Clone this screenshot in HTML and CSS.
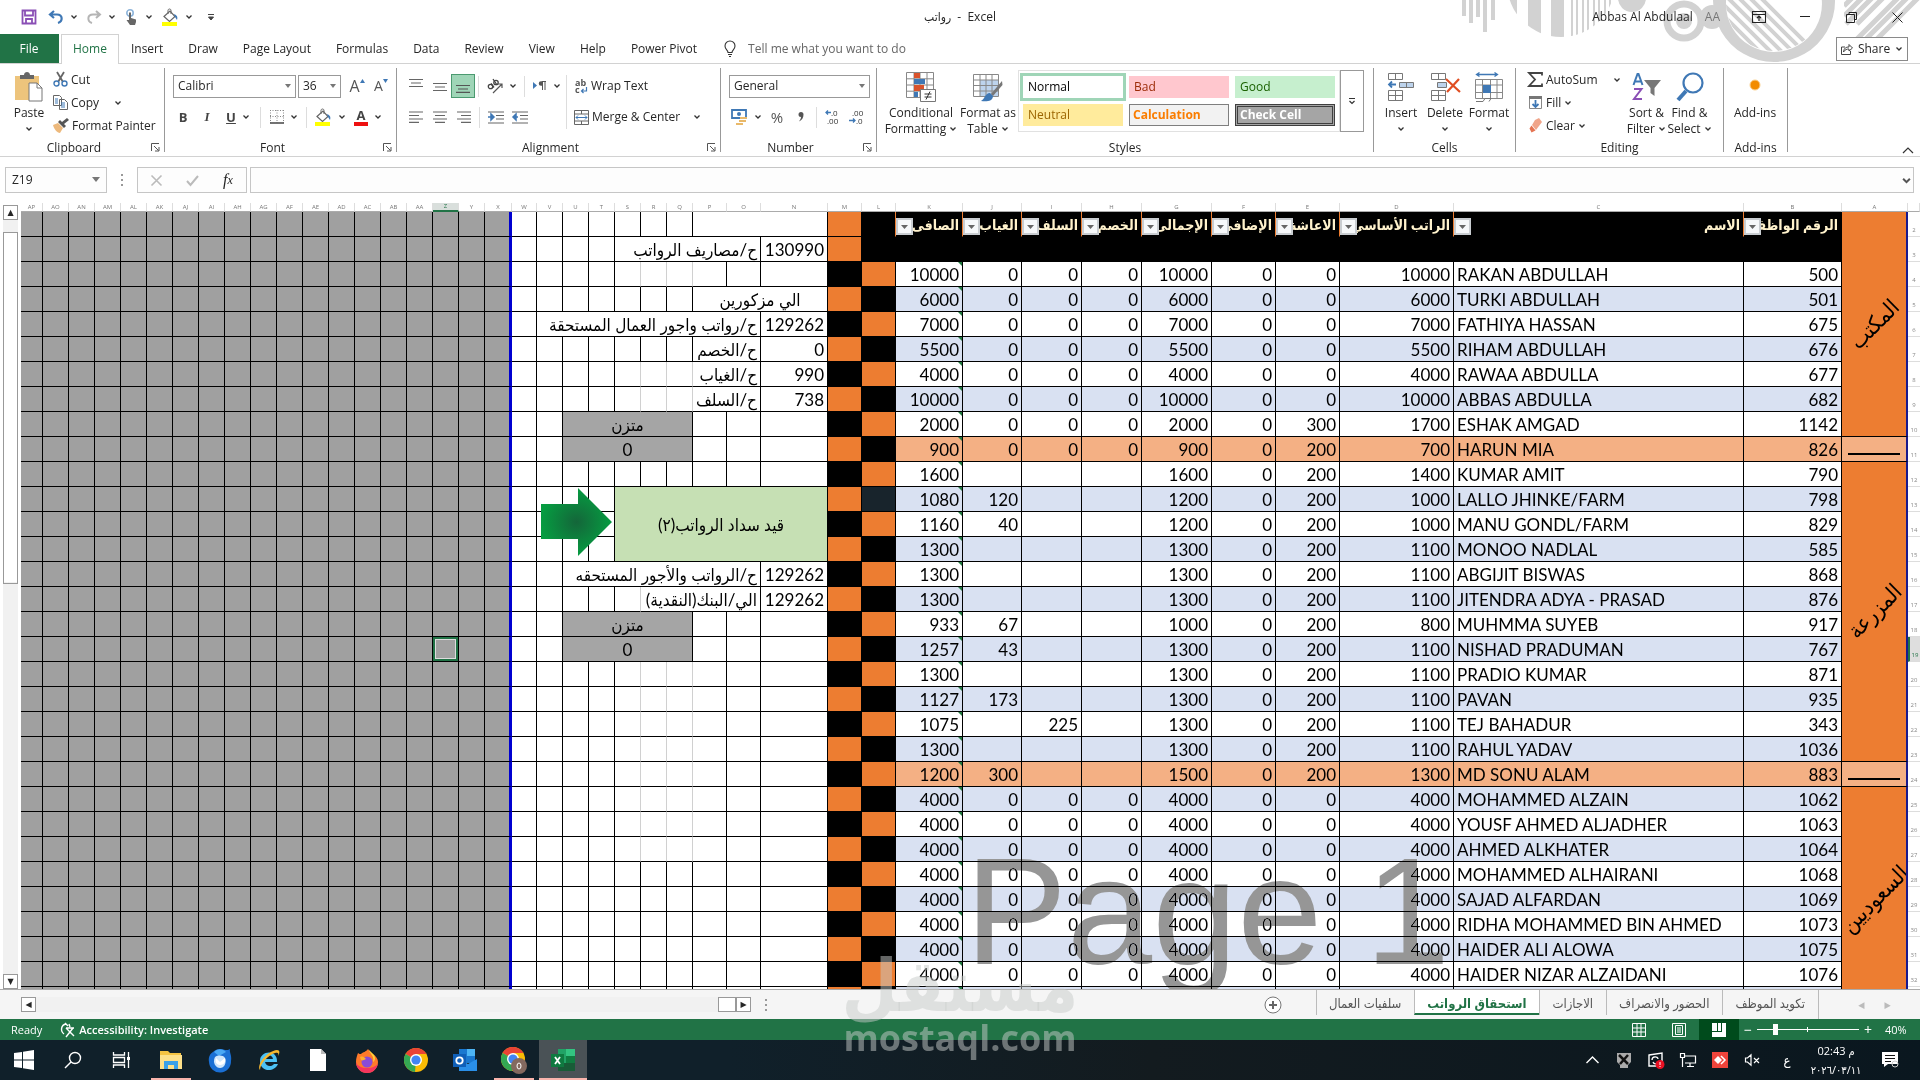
FILE: index.html
```html
<!DOCTYPE html>
<html lang="en">
<head>
<meta charset="utf-8">
<title>رواتب - Excel</title>
<link rel="stylesheet" href="styles.css">
</head>
<body>
<svg class="defs" aria-hidden="true">
  <symbol id="chev" viewBox="0 0 8 8"><path d="M1.5 2.5 4 5l2.500-2.500" fill="none" stroke="#333" stroke-width="1.300"/></symbol>
  <symbol id="bucket" viewBox="0 0 18 18"><path d="M3 8.500 9 3l5 5.500-5.500 5z" fill="#fff" stroke="#666" stroke-width="1.200"/><path d="M7 6V2.500c0-2 3-2 3 0V6" fill="none" stroke="#666"/><path d="M13 6c3 1 4 3 3 6l-2-3z" fill="#3f78b5"/><path d="M1 14h15v4H1z" fill="#ff0"/></symbol>
  <symbol id="launch" viewBox="0 0 9 9"><path d="M.5 8V.5H8M3 3l4.500 4.500M8 4v4H4" fill="none" stroke="#555"/></symbol>
  <symbol id="chrome" viewBox="0 0 24 24"><circle cx="12" cy="12" r="12" fill="#fbbc05"/><path d="M12 12 1.600 6A12 12 0 0 1 22.400 6z" fill="#ea4335"/><path d="M12 12 1.600 6A12 12 0 0 0 11 24z" fill="#34a853"/><path d="M12 6h10.400L17.200 15z" fill="#fbbc05"/><circle cx="12" cy="12" r="6" fill="#fff"/><circle cx="12" cy="12" r="4.600" fill="#4285f4"/></symbol>
</svg>

<header class="titlebar">
  <svg class="banner" viewBox="0 0 460 64" aria-hidden="true">
    <defs>
      <clipPath id="disc"><circle cx="101" cy="-17" r="54"/></clipPath>
      <clipPath id="ringin"><circle cx="314" cy="3" r="48"/></clipPath>
      <clipPath id="corner"><path d="M384 0h76v37h-76z"/></clipPath>
    </defs>
    <g fill="#d2d2d2">
      <path d="M2 0h4v16H2zM9 0h4v23H9zM16 0h4v17h-4zM23 0h4v32h-4zM31 0h4v20h-4z"/>
      <path clip-path="url(#disc)" d="M46 0h11v40H46zM68 0h13v40H68zM91 0h13v40H91zM111 0h2v40h-2zM116 0h2v40h-2zM122 0h2v40h-2zM127 0h2v40h-2zM133 0h2v40h-2zM138 0h2v40h-2zM144 0h2v40h-2zM149 0h2v40h-2z"/>
      <circle cx="172" cy="-2" r="14"/><circle cx="224" cy="21" r="8"/><circle cx="252" cy="17" r="12"/>
      <path fill-rule="evenodd" d="M314-60a61 61 0 1 0 .1 0zM314-44a48 48 0 1 1-.1 0z"/>
    </g>
    <circle cx="224" cy="21" r="17" fill="none" stroke="#d2d2d2" stroke-width="7"/>
    <path clip-path="url(#ringin)" d="M240-8l70 70M251-8l70 70M262-8l70 70M273-8l70 70M284-8l70 70M295-8l70 70" stroke="#d2d2d2" stroke-width="4"/>
    <path clip-path="url(#corner)" d="M384 6l8-8M384 16l20-20M386 24l28-28M397 24l28-28M396 40l44-44M405 40l44-44M416 40l44-44" stroke="#d2d2d2" stroke-width="5"/>
  </svg>
  <div class="quick">
    <button aria-label="Save"><svg width="16" height="16" viewBox="0 0 16 16"><path d="M1.500 1.500h13v13h-13zM4 1.500v5h8v-5M5 14.500V10h6v4.500" fill="#fff" stroke="#8a4fb5" stroke-width="1.800"/></svg></button>
    <button class="split" aria-label="Undo"><svg width="16" height="16" viewBox="0 0 16 16"><path d="M6 2 2 5.500 6 9M2 5.500h7c6 0 6 7 1 8.500" fill="none" stroke="#3f78b5" stroke-width="2.200"/></svg><svg class="ch"><use href="#chev"/></svg></button>
    <button class="split" aria-label="Redo"><svg width="16" height="16" viewBox="0 0 16 16"><path d="m10 2 4 3.500L10 9M14 5.500H7c-6 0-6 7-1 8.500" fill="none" stroke="#b5b5b5" stroke-width="2"/></svg><svg class="ch"><use href="#chev"/></svg></button>
    <button class="split" aria-label="Touch mode"><svg width="14" height="16" viewBox="0 0 14 16"><circle cx="5" cy="4" r="3.200" fill="none" stroke="#8db4da" stroke-width="1.600"/><path d="M4 3.500h2V9l5 1.500V13l-1 3H5L1.500 11 4 11z" fill="#666"/></svg><svg class="ch"><use href="#chev"/></svg></button>
    <button class="split" aria-label="Fill colour"><svg width="18" height="18"><use href="#bucket"/></svg><svg class="ch"><use href="#chev"/></svg></button>
    <button aria-label="Customise toolbar"><svg width="8" height="8" viewBox="0 0 8 8"><path d="M1 1.500h6M1.500 4h5L4 7z" stroke="#444" fill="#444"/></svg></button>
  </div>
  <h1 class="doc"><bdi>رواتب</bdi>&nbsp; - &nbsp;Excel</h1>
  <div class="user">
    <span>Abbas Al Abdulaal</span><span class="initials">AA</span>
    <button aria-label="Ribbon display"><svg width="14" height="12" viewBox="0 0 14 12"><path d="M.5.5h13v11H.5zM.5 3.500h13M7 10V5M5 7l2-2 2 2" fill="none" stroke="#222" stroke-width="1.100"/></svg></button>
    <button aria-label="Minimise"><svg width="10" height="10" viewBox="0 0 10 10"><path d="M0 4.500h10" stroke="#222"/></svg></button>
    <button aria-label="Restore"><svg width="11" height="11" viewBox="0 0 11 11"><path d="M.5 2.500h8v8h-8zM3 2.500v-2h7.500v7h-2" fill="none" stroke="#222"/></svg></button>
    <button aria-label="Close"><svg width="11" height="11" viewBox="0 0 11 11"><path d="m.5.5 10 10m0-10-10 10" stroke="#222"/></svg></button>
  </div>
</header>

<nav class="tabs">
  <a href="#file" class="file">File</a><a href="#home" class="on">Home</a><a href="#insert">Insert</a><a href="#draw">Draw</a><a href="#layout">Page Layout</a><a href="#formulas">Formulas</a><a href="#data">Data</a><a href="#review">Review</a><a href="#view">View</a><a href="#help">Help</a><a href="#pivot">Power Pivot</a>
  <label class="tell"><svg width="12" height="16" viewBox="0 0 12 16"><path d="M4 11.500C4 9 1 8.500 1 5a5 5 0 0 1 10 0c0 3.500-3 4-3 6.500zM4 13.500h4M5 15.500h2" fill="none" stroke="#333" stroke-width="1.100"/></svg><input type="text" placeholder="Tell me what you want to do" aria-label="Tell me what you want to do"></label>
  <button class="share"><svg width="12" height="12" viewBox="0 0 12 12"><path d="M4 4H.5v7.500h9V8M2.500 9C3 5 5 4 8 4V1.500l3.500 3.500L8 8V6C6 6 4 6.500 2.500 9z" fill="none" stroke="#444"/></svg>Share<svg class="ch"><use href="#chev"/></svg></button>
</nav>

<section class="ribbon" aria-label="Home ribbon">
  <div class="group g-clip">
    <div class="body">
      <button class="big"><svg width="28" height="30" viewBox="0 0 28 30"><path d="M0 4h24v24H0z" fill="#edc47c"/><path d="M5 7V3h4c0-4 6-4 6 0h4v4z" fill="#666"/><path d="M14 11h8l5 5v13H14z" fill="#fff" stroke="#777"/><path d="M22 11v5h5" fill="none" stroke="#777"/></svg>Paste<svg class="ch"><use href="#chev"/></svg></button>
      <div class="stack">
        <button><svg width="15" height="15" viewBox="0 0 15 15"><path d="m4 0 6 10M11 0 5 10" stroke="#666" stroke-width="1.800"/><circle cx="3.500" cy="11.500" r="2.500" fill="none" stroke="#3f78b5" stroke-width="1.400"/><circle cx="11.500" cy="11.500" r="2.500" fill="none" stroke="#3f78b5" stroke-width="1.400"/></svg>Cut</button>
        <button><svg width="15" height="15" viewBox="0 0 15 15"><path d="M.5.500h6l2 2v8h-8z M6.500 4.500h5l3 3v7h-8z" fill="#fff" stroke="#666"/><path d="M2 4h3M2 6h3M2 8h3M8 8h4M8 10h4M8 12h4" stroke="#3f78b5"/></svg>Copy<svg class="ch far"><use href="#chev"/></svg></button>
        <button><svg width="16" height="15" viewBox="0 0 16 15"><path d="m0 7 5-2 5 5-3 5c-3 0-6-4-7-8z" fill="#edb97c"/><path d="m5 4 6 6 2-2-2-2 5-4-2-2-5 4-2-2z" fill="#555"/></svg>Format Painter</button>
      </div>
    </div>
    <footer>Clipboard<svg class="la"><use href="#launch"/></svg></footer>
  </div>

  <div class="group g-font">
    <div class="body lines">
      <div class="line">
        <select class="combo face" aria-label="Font"><option>Calibri</option></select><select class="combo size" aria-label="Font size"><option>36</option></select>
        <button class="ic" aria-label="Increase font size"><span class="gl">A</span><svg width="5" height="14" viewBox="0 0 5 14"><path d="M0 4h5L2.500 0z" fill="#3f78b5"/></svg></button>
        <button class="ic" aria-label="Decrease font size"><span class="gs">A</span><svg width="5" height="14" viewBox="0 0 5 14"><path d="M0 0h5L2.500 4z" fill="#3f78b5"/></svg></button>
      </div>
      <div class="line">
        <button class="ic" aria-label="Bold"><b>B</b></button><button class="ic" aria-label="Italic"><b class="it">I</b></button>
        <button class="split" aria-label="Underline"><b class="un">U</b><svg class="ch"><use href="#chev"/></svg></button><i class="sep"></i>
        <button class="split" aria-label="Borders"><svg width="14" height="14" viewBox="0 0 14 14"><path d="M.5 0v13M7 0v13M13.500 0v13M0 .5h14M0 6.500h14" stroke="#888" stroke-dasharray="1 1.500"/><path d="M0 13h14" stroke="#444" stroke-width="1.500"/></svg><svg class="ch"><use href="#chev"/></svg></button><i class="sep"></i>
        <button class="split" aria-label="Fill colour"><svg width="18" height="18"><use href="#bucket"/></svg><svg class="ch"><use href="#chev"/></svg></button>
        <button class="split" aria-label="Font colour"><b class="fc">A</b><svg class="ch"><use href="#chev"/></svg></button>
      </div>
    </div>
    <footer>Font<svg class="la"><use href="#launch"/></svg></footer>
  </div>

  <div class="group g-align">
    <div class="body">
      <div class="lines grow">
        <div class="line">
          <button class="ic" aria-label="Top align"><svg width="14" height="14" viewBox="0 0 14 14"><path d="M0 .5h14M2 4h10M0 7.500h14" stroke="#666" stroke-width="1.200"/></svg></button>
          <button class="ic" aria-label="Middle align"><svg width="14" height="14" viewBox="0 0 14 14"><path d="M0 4.500h14M2 8h10M0 11.500h14" stroke="#666" stroke-width="1.200"/></svg></button>
          <button class="ic active" aria-label="Bottom align"><svg width="14" height="14" viewBox="0 0 14 14"><path d="M0 6.500h14M2 10h10M0 13.400h14" stroke="#555" stroke-width="1.200"/></svg></button><i class="sep"></i>
          <button class="split" aria-label="Orientation"><svg width="16" height="16" viewBox="0 0 16 16"><g fill="none" stroke="#444" stroke-width="1.300"><circle cx="3.500" cy="8.500" r="2.200"/><path d="m4 5.500 3 4M6 1l4 6"/><circle cx="9" cy="4.500" r="2.200"/></g><path d="M6 15 15 6M15 10V6h-4" fill="none" stroke="#555" stroke-width="1.200"/></svg><svg class="ch"><use href="#chev"/></svg></button><i class="sep"></i>
          <button class="split" aria-label="Text direction"><svg width="14" height="14" viewBox="0 0 14 14"><path d="M0 3v7l4-3.500z" fill="#3f78b5"/><path d="M9 2.500h4M9.500 2v9M12 2v9" stroke="#555"/><path d="M9.500 2.200H8a2 2 0 0 0 0 4.500h1.500z" fill="#555"/></svg><svg class="ch"><use href="#chev"/></svg></button>
        </div>
        <div class="line">
          <button class="ic" aria-label="Align left"><svg width="14" height="12" viewBox="0 0 14 12"><path d="M0 1h14M0 4.500h10M0 8h14M0 11.400h10" stroke="#666" stroke-width="1.200"/></svg></button>
          <button class="ic" aria-label="Centre"><svg width="14" height="12" viewBox="0 0 14 12"><path d="M0 1h14M2 4.500h10M0 8h14M2 11.400h10" stroke="#666" stroke-width="1.200"/></svg></button>
          <button class="ic" aria-label="Align right"><svg width="14" height="12" viewBox="0 0 14 12"><path d="M0 1h14M4 4.500h10M0 8h14M4 11.400h10" stroke="#666" stroke-width="1.200"/></svg></button><i class="sep"></i>
          <button class="ic" aria-label="Decrease indent"><svg width="16" height="13" viewBox="0 0 16 13"><path d="M0 1h16M8 4.500h8M8 8h8M0 12h16" stroke="#666" stroke-width="1.200"/><path d="M0 6h4M3 3l3 3-3 3z" stroke="#3f78b5" stroke-width="1.500" fill="#3f78b5"/></svg></button>
          <button class="ic" aria-label="Increase indent"><svg width="16" height="13" viewBox="0 0 16 13"><path d="M0 1h16M8 4.500h8M8 8h8M0 12h16" stroke="#666" stroke-width="1.200"/><path d="M6 6H3M4 3 1 6l3 3z" stroke="#3f78b5" stroke-width="1.500" fill="#3f78b5"/></svg></button>
        </div>
      </div>
      <i class="tall"></i>
      <div class="lines wrapcol">
        <div class="line"><button class="txt"><svg width="14" height="16" viewBox="0 0 14 16"><text x="1" y="8" font-size="9" font-weight="700" fill="#555">ab</text><text x="1" y="15" font-size="9" font-weight="700" fill="#555">c</text><path d="M12.500 9v4H7.500M9.500 11l-2 2 2 2" fill="none" stroke="#3f78b5" stroke-width="1.200"/></svg>Wrap Text</button></div>
        <div class="line"><button class="txt"><svg width="15" height="15" viewBox="0 0 15 15"><path d="M.5.5h14v14H.5zM.5 4h14M.5 11h14M7.500.5V4M7.500 11v3.500" fill="none" stroke="#666"/><path d="M2 7.500h11M4 5.500l-2 2 2 2M11 5.500l2 2-2 2" fill="none" stroke="#3f78b5"/></svg>Merge &amp; Center<svg class="ch far"><use href="#chev"/></svg></button></div>
      </div>
    </div>
    <footer>Alignment<svg class="la"><use href="#launch"/></svg></footer>
  </div>

  <div class="group g-num">
    <div class="body lines">
      <div class="line"><select class="combo fmt" aria-label="Number format"><option>General</option></select></div>
      <div class="line">
        <button class="split" aria-label="Accounting format"><svg width="17" height="16" viewBox="0 0 17 16"><path d="M1 1h14v8H1z" fill="#fff" stroke="#3f78b5" stroke-width="1.800"/><circle cx="8" cy="5" r="2" fill="#3f78b5"/><path d="M9 8h7v2H9zM8 11h7v2H8zM5 14h7v2H5z" fill="#e9b96a"/></svg><svg class="ch"><use href="#chev"/></svg></button>
        <button class="ic pct" aria-label="Percent style">%</button><button class="ic pct" aria-label="Comma style"><svg width="6" height="10" viewBox="0 0 6 10"><path d="M3 0a2.500 2.500 0 0 1 2.500 2.500C5.500 6 4 8 1 9.500 2.500 7.500 3 6 3 5A2.500 2.500 0 0 1 3 0z" fill="#555"/></svg></button><i class="sep"></i>
        <button class="ic" aria-label="Increase decimal"><svg width="16" height="16" viewBox="0 0 16 16"><text x="6" y="7" font-size="8" fill="#333">.0</text><text x="2" y="15" font-size="8" fill="#333">.00</text><path d="M6 3.500H1M3 1.500l-2 2 2 2" fill="none" stroke="#3f78b5" stroke-width="1.300"/></svg></button>
        <button class="ic" aria-label="Decrease decimal"><svg width="16" height="16" viewBox="0 0 16 16"><text x="3" y="7" font-size="8" fill="#333">.00</text><text x="7" y="15" font-size="8" fill="#333">.0</text><path d="M0 11.500h6M4 9.500l2 2-2 2" fill="none" stroke="#3f78b5" stroke-width="1.300"/></svg></button>
      </div>
    </div>
    <footer>Number<svg class="la"><use href="#launch"/></svg></footer>
  </div>

  <div class="group g-styles">
    <div class="body">
      <button class="big wide"><svg width="30" height="30" viewBox="0 0 30 30"><path d="M.5.5h27v25H.5zM.5 6.800h27M.5 13h27M.5 19.200h27M8 .5v25M21 .5v25M14 .5v25" fill="#fff" stroke="#888"/><path d="M8 1h6v5H8zM8 13h10v6H8z" fill="#d9532c"/><path d="M8 7h11v5H8zM8 20h4v5H8z" fill="#3f78b5"/><path d="M14.500 17.500h15v12h-15z" fill="#fff" stroke="#777"/><path d="M18.500 22h7M18.500 25h7M24 19.500l-4 8" stroke="#333"/></svg><span>Conditional<br>Formatting <svg class="ch"><use href="#chev"/></svg></span></button>
      <button class="big mid"><svg width="30" height="30" viewBox="0 0 30 30"><path d="M.5 2.500h25v22H.5z" fill="#fff"/><path d="M7 8h18v16H7z" fill="#bdd3ec"/><path d="M.5 2.500h25v22H.5zM.5 8h25M.5 13.500h25M.5 19h25M7 2.500v22M13 2.500v22M19 2.500v22" fill="none" stroke="#888"/><path d="M29 9 18 22l2 2L29.500 13z" fill="#777"/><path d="M17 21c-5 0-5 6-9 8 6 1 12 0 12-5z" fill="#3f78b5"/></svg><span>Format as<br>Table <svg class="ch"><use href="#chev"/></svg></span></button>
      <div class="gallery">
        <button class="st normal">Normal</button><button class="st bad">Bad</button><button class="st good">Good</button>
        <button class="st neutral">Neutral</button><button class="st calc">Calculation</button><button class="st check">Check Cell</button>
      </div>
      <button class="more" aria-label="More styles"><svg width="8" height="8" viewBox="0 0 8 8"><path d="M1 1.500h6M1.500 4 4 6.500 6.500 4" fill="none" stroke="#333" stroke-width="1.200"/></svg></button>
    </div>
    <footer>Styles</footer>
  </div>

  <div class="group g-cells">
    <div class="body">
      <button class="big"><svg width="28" height="30" viewBox="0 0 28 30"><path d="M1.500 1.500h14v6h-14zM8.500 1.500v6M1.500 18.500h14v10h-14zM8.500 18.500v10M1.500 23.500h14" fill="#fff" stroke="#777"/><path d="M12.500 10.500h14v5h-14zM19.500 10.500v5" fill="#bdd3ec" stroke="#777"/><path d="M9 12.500H2M5 9.500l-3 3 3 3" fill="none" stroke="#3f78b5" stroke-width="1.800"/></svg>Insert<svg class="ch"><use href="#chev"/></svg></button>
      <button class="big"><svg width="30" height="30" viewBox="0 0 30 30"><path d="M1.500 1.500h14v6h-14zM8.500 1.500v6M1.500 18.500h14v10h-14zM8.500 18.500v10M1.500 23.500h14" fill="#fff" stroke="#777"/><path d="M7.500 10.500h9v5h-9z" fill="#bdd3ec" stroke="#777"/><path d="m16 7 14 13M29 7 17 20" stroke="#e04e22" stroke-width="2.200"/></svg>Delete<svg class="ch"><use href="#chev"/></svg></button>
      <button class="big"><svg width="28" height="30" viewBox="0 0 28 30"><path d="M.5 7.500h27v19H.5zM.5 13h27M.5 20.500h27M7.500 7.500v19M15.500 7.500v19M22 7.500v19" fill="#fff" stroke="#888"/><path d="M8 13h8v8H8z" fill="#3f78b5"/><path d="M2 2.500h20M4.500.5l-3 2 3 2M19.500.5l3 2-3 2" fill="none" stroke="#3f78b5" stroke-width="1.300"/><path d="M1 29.500h7l2-3h6l-2 3" fill="#fff" stroke="#777"/></svg>Format<svg class="ch"><use href="#chev"/></svg></button>
    </div>
    <footer>Cells</footer>
  </div>

  <div class="group g-edit">
    <div class="body">
      <div class="stack">
        <button><svg width="15" height="15" viewBox="0 0 15 15"><path d="M14 3.500V1H1l6 6.500L1 14h13v-2.500" fill="none" stroke="#444" stroke-width="1.800"/></svg>AutoSum<svg class="ch far"><use href="#chev"/></svg></button>
        <button><svg width="15" height="15" viewBox="0 0 15 15"><path d="M1.500 1.500h12v12h-12z" fill="#fff" stroke="#888"/><path d="M1 1h13v3H1z" fill="#777"/><path d="M7.500 5v6.500M4.500 9l3 3 3-3" fill="none" stroke="#3f78b5" stroke-width="1.800"/></svg>Fill<svg class="ch"><use href="#chev"/></svg></button>
        <button><svg width="15" height="15" viewBox="0 0 15 15"><path d="m7 2 4-2 3 4-6 8-4-5z" fill="#f0a58a"/><path d="m3.500 7.500 4 5-4 2-2-4z" fill="#e57452"/></svg>Clear<svg class="ch"><use href="#chev"/></svg></button>
      </div>
      <button class="big sort"><svg width="30" height="30" viewBox="0 0 30 30"><path d="m1.500 13 4-11h1l4 11M3 9.500h6" fill="none" stroke="#3f78b5" stroke-width="2"/><path d="M2 17h7.500L2 27h8" fill="none" stroke="#8a4fb5" stroke-width="2"/><path d="M12 8h17l-6.500 8v8l-4-3v-5z" fill="#777"/></svg><span>Sort &amp;<br>Filter <svg class="ch"><use href="#chev"/></svg></span></button>
      <button class="big sort"><svg width="28" height="30" viewBox="0 0 28 30"><circle cx="17" cy="11" r="9.500" fill="none" stroke="#3f78b5" stroke-width="2.200"/><path d="M10 19 2 28" stroke="#3f78b5" stroke-width="4"/></svg><span>Find &amp;<br>Select <svg class="ch"><use href="#chev"/></svg></span></button>
    </div>
    <footer>Editing</footer>
  </div>

  <div class="group g-add">
    <div class="body"><button class="big"><svg width="28" height="30" viewBox="0 0 28 30"><circle cx="14" cy="13" r="5" fill="#f28c00" stroke="#fbd08c"/></svg>Add-ins</button></div>
    <footer>Add-ins</footer>
  </div>
  <button class="fold" aria-label="Collapse ribbon"><svg width="12" height="8" viewBox="0 0 12 8"><path d="m1 7 5-5 5 5" fill="none" stroke="#333" stroke-width="1.200"/></svg></button>
</section>

<section class="formula" aria-label="Formula bar">
  <div class="namebox"><input type="text" value="Z19" aria-label="Name box"><svg width="8" height="6" viewBox="0 0 8 6"><path d="M0 0h8L4 5z" fill="#777"/></svg></div>
  <span class="dots"></span>
  <div class="fxbox">
    <button aria-label="Cancel"><svg width="11" height="11" viewBox="0 0 11 11"><path d="m.5.5 10 10m0-10-10 10" stroke="#bbb" stroke-width="1.600"/></svg></button>
    <button aria-label="Enter"><svg width="13" height="11" viewBox="0 0 13 11"><path d="m1 6 3.500 4L12 1" fill="none" stroke="#bbb" stroke-width="2"/></svg></button>
    <button class="fx" aria-label="Insert function">f<sub>x</sub></button>
  </div>
  <div class="fxinput"><input type="text" aria-label="Formula"><svg width="9" height="9" viewBox="0 0 8 8"><path d="M1 2.500 4 5.500l3-3" fill="none" stroke="#555" stroke-width="1.800"/></svg></div>
</section>

<main class="sheet">
  <div class="vscroll"><button aria-label="Scroll up">▲</button><span class="vthumb"></span><button aria-label="Scroll down">▼</button></div>
  <div class="gridwrap">
    <table id="grid" dir="rtl"></table>
    <div class="pagemark">Page 1</div>
  </div>
</main>

<nav class="strip" aria-label="Sheets">
  <div class="hscroll"><button aria-label="Scroll left">◀</button><span class="htrack"></span><span class="hthumb"></span><button aria-label="Scroll right">▶</button></div>
  <span class="dots"></span>
  <button class="plus" aria-label="New sheet"><svg width="18" height="18" viewBox="0 0 18 18"><circle cx="9" cy="9" r="8" fill="#fff" stroke="#777"/><path d="M9 5v8M5 9h8" stroke="#666" stroke-width="2"/></svg></button>
  <div class="sheets" dir="rtl">
    <a href="#s1">تكويد الموظف</a><a href="#s2">الحضور والانصراف</a><a href="#s3">الاجازات</a><a href="#s4" class="cur">استحقاق الرواتب</a><a href="#s5">سلفيات العمال</a>
  </div>
  <div class="arrows"><span>◀</span><span>▶</span></div>
</nav>

<footer class="status">
  <span class="ready">Ready</span>
  <svg width="16" height="16" viewBox="0 0 16 16"><path d="M6 2C1 3 0 9 4 12M5 1l3 3M9 2l1 3M6 6l8 8M13 6l-7 9M6 6h8" fill="none" stroke="#fff" stroke-width="1.400"/></svg>
  <b>Accessibility: Investigate</b>
  <div class="views">
    <button aria-label="Normal view"><svg width="14" height="14" viewBox="0 0 14 14"><path d="M.5.5h13v13H.5zM.5 5h13M.5 9h13M5 .5v13M9 .5v13" fill="none" stroke="#fff"/></svg></button>
    <button aria-label="Page layout view"><svg width="14" height="14" viewBox="0 0 14 14"><path d="M.5.5h13v13H.5zM3.500 2.500h7v9h-7zM5 5h4M5 7h4M5 9h4" fill="none" stroke="#fff"/></svg></button>
    <button class="sel" aria-label="Page break view"><svg width="14" height="14" viewBox="0 0 14 14"><path d="M0 0h5v8H0zM6 0h3v8H6zM10 0h4v14H0V9h10z" fill="#fff"/></svg></button>
  </div>
  <button class="z" aria-label="Zoom out">−</button><input type="range" min="10" max="400" value="75" aria-label="Zoom"><button class="z" aria-label="Zoom in">+</button><span class="pc">40%</span>
</footer>

<footer class="taskbar">
  <button aria-label="Start"><svg width="20" height="20" viewBox="0 0 20 20"><path d="M0 3l8-1v7.500H0zM9 1.800 20 0v9.500H9zM0 10.500h8V18l-8-1zM9 10.500h11V20L9 18.200z" fill="#fff"/></svg></button>
  <button aria-label="Search"><svg width="18" height="18" viewBox="0 0 18 18"><circle cx="11" cy="7" r="5.500" fill="none" stroke="#fff" stroke-width="1.400"/><path d="m7 11-6 6" stroke="#fff" stroke-width="1.400"/></svg></button>
  <button aria-label="Task view"><svg width="18" height="16" viewBox="0 0 18 16"><path d="M.5 0v3h11V0M.5 5.500h11v5H.5zM.5 16v-3h11v3M15.500 0v16" fill="none" stroke="#fff" stroke-width="1.300"/><path d="M14 5h3v3h-3z" fill="#fff"/></svg></button>
  <button class="run" aria-label="File Explorer"><svg width="22" height="22" viewBox="0 0 22 22"><path d="M0 2h8l2 2h11v16H0z" fill="#f5c342"/><path d="M0 6h22v14H0z" fill="#fde08a"/><path d="M4 12h14v8h-4v-4H8v4H4z" fill="#3aa0e8"/></svg></button>
  <button aria-label="Thunderbird"><svg width="24" height="24" viewBox="0 0 24 24"><path d="M1 14C0 8 3 5 5 4c3-3 8-4 12-2 2 0 4 0 5-1-1 3 2 6 1 12a11 11 0 0 1-22 1z" fill="#1a6fd4"/><path d="M6 4c4-4 9-3 12 0l-7 4z" fill="#49a8f5"/><path d="M7 9c3-2 8-2 10 1 2 5-1 10-5 10s-8-5-5-11z" fill="#cfe6fb"/><path d="m8 10 4 4 5-4c1 4-1 7-5 7s-5-4-4-7z" fill="#fff"/></svg></button>
  <button aria-label="Internet Explorer"><svg width="24" height="24" viewBox="0 0 24 24"><path d="M20 14H8c1 5 7 5 9 2h4c-4 9-18 8-18-3C3 2 21 1 20 14zM8 11h8c-1-5-7-5-8 0z" fill="#4cc2f5"/><path d="M3 22C-1 17 10 3 20 2c3 0 3 3 1 6 1-3 0-4-3-3C11 7 3 16 3 22z" fill="#f5b72f"/></svg></button>
  <button aria-label="Document"><svg width="16" height="22" viewBox="0 0 16 22"><path d="M0 0h11l5 5v17H0z" fill="#fff"/><path d="M11 0v5h5z" fill="#bbb"/></svg></button>
  <button aria-label="Firefox"><svg width="24" height="24" viewBox="0 0 24 24"><path d="M3 5c1 1 2 1 3 1 2-2 5-2 7-5 1 2 3 3 5 5 3 2 5 5 5 8a11 11 0 0 1-22 0c0-4 1-6 2-9z" fill="#ff7a2a"/><path d="M1 14a11 11 0 0 0 22 0c0 4-6 6-11 6S2 18 1 14z" fill="#f5355e"/><path d="M14 2c0 3 6 6 4 12 3-2 2-5 1-7z" fill="#ffd43a"/><circle cx="12" cy="14" r="5.500" fill="#8a4bd8"/><path d="M5 9c3-1 4 0 6 2-2 1-4 2-5 1z" fill="#ffb02e"/></svg></button>
  <button aria-label="Chrome"><svg width="24" height="24"><use href="#chrome"/></svg></button>
  <button aria-label="Outlook"><svg width="24" height="22" viewBox="0 0 24 22"><path d="M6 0h16v14H6z" fill="#1a78d0"/><path d="M14 0h8v7h-8z" fill="#4db5f5"/><path d="M6 10l9 5 9-5v12H6z" fill="#2a8fe8"/><path d="M0 5h13v13H0z" fill="#0f5fb8"/><circle cx="6.500" cy="11.500" r="3.200" fill="none" stroke="#fff" stroke-width="1.800"/></svg></button>
  <button class="run" aria-label="Chrome profile"><svg width="28" height="28" viewBox="0 0 28 28"><svg x="1" y="1" width="24" height="24"><use href="#chrome"/></svg><circle cx="19" cy="20" r="8" fill="#84695f"/><ellipse cx="19" cy="20" rx="2" ry="3" fill="none" stroke="#fff"/></svg></button>
  <button class="run front" aria-label="Excel"><svg width="24" height="22" viewBox="0 0 24 22"><path d="M7 0h17v22H7z" fill="#21a366"/><path d="M15 0h9v7h-9z" fill="#33c481"/><path d="M7 14h17v8H7z" fill="#185c37"/><path d="M15 7h9v7h-9z" fill="#107c41"/><path d="M0 5h13v13H0z" fill="#0f7a40"/><path d="m4 8 5 7M9 8l-5 7" stroke="#fff" stroke-width="1.800"/></svg></button>
  <div class="tray">
    <button aria-label="Hidden icons"><svg width="13" height="8" viewBox="0 0 13 8"><path d="m.5 7 6-6 6 6" fill="none" stroke="#fff" stroke-width="1.400"/></svg></button>
    <button aria-label="Device"><svg width="16" height="16" viewBox="0 0 16 16"><path d="M1 1h14v9l-3 3v3H4v-3l-3-3z" fill="#aaa"/><path d="m3 3 9 9M12 3l-8 9" stroke="#111" stroke-width="2.500"/></svg></button>
    <button aria-label="Update"><svg width="17" height="17" viewBox="0 0 17 17"><path d="M1 3 14 1v13H1z" fill="none" stroke="#fff" stroke-width="1.400"/><path d="M4 8c0-4 6-4 6-1M11 9c0 3-5 4-6 1" fill="none" stroke="#fff" stroke-width="1.300"/><circle cx="12" cy="12.500" r="4.500" fill="#e81123"/><path d="M12 10v3M12 14v1" stroke="#fff"/></svg></button>
    <button aria-label="Network"><svg width="16" height="14" viewBox="0 0 16 14"><path d="M4 3h11.500v7H5M10 10v3M7 13.500h7M.5.5h4v4h-4zM2.500 4.500V14" fill="none" stroke="#fff" stroke-width="1.200"/></svg></button>
    <button aria-label="AnyDesk"><svg width="16" height="16" viewBox="0 0 16 16"><path d="M0 0h16v16H0z" fill="#ef443b"/><path d="m6 4 4 4-4 4-4-4z" fill="#fff"/><path d="m9 4 4 4-4 4" fill="none" stroke="#fff" stroke-width="1.500"/></svg></button>
    <button aria-label="Muted"><svg width="15" height="12" viewBox="0 0 15 12"><path d="M.5 4h2L6 .8v10.400L2.500 8h-2zM9 4l5 5M14 4 9 9" fill="none" stroke="#fff" stroke-width="1.200"/></svg></button>
    <button class="lang">ع</button>
    <div class="clock"><time><bdi>02:43</bdi> <bdi>م</bdi></time><span dir="ltr">٢٠٢٦/٠٣/١١</span></div>
    <button class="note" aria-label="Notifications"><svg width="17" height="16" viewBox="0 0 17 16"><path d="M0 0h16v12H6l-4 3v-3H0z" fill="#fff"/><path d="M3 3.500h10M3 6.500h10M3 9.500h6" stroke="#111"/><circle cx="13" cy="12" r="3" fill="none" stroke="#ccc"/></svg></button>
  </div>
</footer>

<div class="sitemark"><span class="ar">مستقل</span><span class="la2">mostaql.com</span></div>
<script src="grid.js"></script>
</body>
</html>
```
FILE: styles.css
```css
* { box-sizing: border-box; }
body {
  margin: 0; height: 100vh; display: flex; flex-direction: column; overflow: hidden;
  background: #fff; color: #262626; font: 12px/16px "Open Sans", "DejaVu Sans Condensed", "DejaVu Sans", sans-serif;
}
button { border: 0; background: none; padding: 0; margin: 0; font: inherit; color: inherit; display: flex; align-items: center; justify-content: center; }
input, select { font: inherit; color: inherit; border: 0; background: none; padding: 0; margin: 0; min-width: 0; }
svg { flex: none; display: block; overflow: visible; }
a { color: inherit; text-decoration: none; }
.defs { position: absolute; width: 0; height: 0; }
.ch { width: 8px; height: 8px; }

.titlebar { position: relative; display: grid; grid-template-columns: 1fr auto 1fr; align-items: center; height: 34px; flex: none; }
.banner { position: absolute; right: 0; top: 0; width: 460px; height: 64px; overflow: hidden; }
.quick { display: flex; align-items: center; padding-left: 18px; gap: 8px; }
.quick button { gap: 6px; min-width: 22px; height: 24px; }
.quick .split { width: 30px; }
.doc { margin: 0; font-size: 12px; font-weight: 400; }
.user { position: relative; display: flex; align-items: center; justify-content: flex-end; }
.user button { width: 46px; height: 30px; }
.initials { color: #777; margin: 0 16px 0 12px; }

.tabs { position: relative; display: flex; height: 30px; flex: none; border-bottom: 1px solid #d2d2d2; padding-right: 12px; }
.tabs a { padding: 7px 13px 0 12px; height: 30px; }
.tabs .file { background: #217346; color: #fff; width: 59px; height: 29px; text-align: center; margin-right: 2px; }
.tabs .on { color: #217346; background: #fff; border: 1px solid #d2d2d2; border-bottom: 0; padding: 6px 11px 0; }
.tell { display: flex; align-items: center; gap: 12px; padding-left: 14px; flex: 1; }
.tell input { flex: 1; }
.tell input::placeholder { color: #666; opacity: 1; }
.share { width: 72px; height: 24px; border: 1px solid #8a8a8a; background: #fff; margin-top: 3px; gap: 5px; }

.ribbon { display: flex; height: 93px; flex: none; border-bottom: 1px solid #d2d2d2; padding-top: 4px; position: relative; }
.group { display: flex; flex-direction: column; height: 84px; border-right: 1px solid #999; }
.group .body { display: flex; flex: 1; min-height: 0; }
.group footer { display: flex; justify-content: center; height: 12px; line-height: 16px; position: relative; }
.la { position: absolute; right: 4px; top: 3px; width: 9px; height: 9px; }
.g-clip { width: 165px; } .g-font { width: 232px; } .g-align { width: 324px; } .g-num { width: 156px; }
.g-clip footer, .g-font footer, .g-align footer, .g-num footer { padding-right: 16px; }
.g-styles { width: 497px; } .g-cells { width: 142px; } .g-edit { width: 208px; } .g-add { width: 64px; }
.big { flex-direction: column; justify-content: flex-start; align-items: center; width: 48px; padding-top: 4px; gap: 3px; line-height: 16px; text-align: center; }
.big .ch { margin-top: 1px; }
.big span .ch { display: inline-block; margin: 0; }
.g-clip .big { margin-left: 5px; }
.stack { display: flex; flex-direction: column; width: 110px; }
.stack button { height: 23px; justify-content: flex-start; gap: 3px; white-space: nowrap; }
.stack .far { margin-left: 12px; }
.lines { display: flex; flex-direction: column; gap: 7px; padding-top: 6px; }
.line { display: flex; align-items: center; height: 24px; }
.lines.grow { width: 169px; padding-left: 7px; }
.g-font .line, .g-num .line { padding-left: 6px; }
.ic { width: 24px; height: 24px; }
.split { width: 38px; height: 24px; gap: 6px; }
.ic b, .split b { font-size: 13px; color: #444; }
.it { font-style: italic; font-family: "Liberation Serif", serif; }
.un { text-decoration: underline; }
.split .fc { border-bottom: 4px solid #e11; line-height: 13px; padding: 0 3px; }
.gl { font-size: 16px; color: #555; } .gs { font-size: 14px; color: #555; }
.pct { font-size: 15px; color: #555; }
.sep { width: 1px; height: 21px; background: #ddd; margin: 0 4px 0 3px; }
.tall { width: 1px; height: 54px; background: #ddd; margin-top: 7px; }
.active { background: #9fd5b7; border: 1px solid #4b9a70; }
.combo { appearance: none; height: 23px; border: 1px solid #999; padding: 0 4px; background: url("data:image/svg+xml,%3Csvg xmlns='http://www.w3.org/2000/svg' width='6' height='4'%3E%3Cpath d='M0 0h6L3 4z' fill='%23777'/%3E%3C/svg%3E") no-repeat right 4px center; }
.face { width: 123px; margin: 0 2px; } .size { width: 43px; margin-right: 4px; } .fmt { width: 141px; margin-left: 2px; }
.txt { gap: 3px; white-space: nowrap; }
.txt .far { margin-left: 10px; }
.wrapcol { padding-left: 7px; }
.g-styles .big.wide { width: 76px; margin-left: 6px; } .g-styles .big.mid { width: 58px; }
.gallery { display: grid; grid-template-columns: repeat(3, 100px); grid-auto-rows: 22px; gap: 6px; padding: 5px 4px; border: 1px solid #e1e1e1; height: 62px; margin: 2px 0 0 1px; align-content: start; }
.st { justify-content: flex-start; padding-left: 5px; }
.normal { background: #fff; outline: 3px solid #9fd5b7; color: #000; }
.bad { background: #ffc7ce; color: #9c2a06; } .good { background: #c6efce; color: #1a6100; }
.neutral { background: #ffeb9c; color: #9c6500; }
.calc { background: #f2f2f2; color: #fa7d00; border: 1px solid #7f7f7f; font-weight: 700; padding-left: 3px; }
.check { background: #a5a5a5; color: #fff; border: 3px double #3f3f3f; font-weight: 700; padding-left: 2px; }
.more { width: 24px; height: 62px; border: 1px solid #999; margin-top: 2px; }
.g-cells .body { padding-left: 5px; } .g-cells .big { width: 44px; }
.g-edit .body { padding-left: 12px; } .g-edit .stack { width: 97px; }
.sort { width: 43px; white-space: nowrap; }
.g-add .big { width: 62px; }
.fold { position: absolute; right: 6px; bottom: 2px; }

.formula { display: flex; align-items: center; height: 46px; flex: none; padding: 0 6px 0 5px; }
.namebox, .fxbox, .fxinput { display: flex; align-items: center; height: 26px; border: 1px solid #c6c6c6; background: #fdfdfd; }
.namebox { width: 102px; padding: 0 6px; }
.namebox input, .fxinput input { flex: 1; }
.dots { width: 2px; height: 12px; margin: 0 14px; background: repeating-linear-gradient(#999 0 2px, transparent 2px 5px); }
.fxbox { width: 110px; margin-right: 3px; }
.fxbox button { flex: 1; }
.fx { font: italic 16px/20px "Liberation Serif", serif; }
.fx sub { font-size: 12px; line-height: 12px; }
.fxinput { flex: 1; padding: 0 2px; }

.sheet { display: flex; flex: 1; min-height: 0; border-bottom: 1px solid #ababab; }
.vscroll { width: 21px; display: flex; flex-direction: column; padding: 2px 3px 0; background: #fff; }
.vscroll button { height: 15px; border: 1px solid #999; font: 8px/8px "DejaVu Sans", sans-serif; background: #fff; }
.vthumb { flex: 1; background: linear-gradient(#fff, #fff) no-repeat 0 12px / 100% 350px, #f1f1f1; position: relative; }
.vthumb::after { content: ""; position: absolute; left: 0; right: 0; top: 12px; height: 350px; border: 1px solid #999; }
.gridwrap { flex: 1; min-width: 0; position: relative; overflow: hidden; }
table { width: 100%; table-layout: fixed; border-collapse: separate; border-spacing: 0; }
td, th { padding: 0; overflow: hidden; white-space: nowrap; }
thead th { height: 9px; font: 6px/8px "Open Sans", sans-serif; color: #777; border-right: 1px solid #ddd; border-bottom: 1px solid #ababab; }
thead th.pick { background: #d9dfdc; color: #217346; border-bottom: 2px solid #217346; line-height: 7px; }
tbody td { height: 25px; font: 17px/23px Lato, "DejaVu Sans Condensed", "DejaVu Sans", sans-serif; color: #000; border-right: 1px solid #000; border-bottom: 1px solid #000; text-align: right; padding: 1px 3px 0; }
tbody th { height: 25px; font: 6px/6px "Open Sans", sans-serif; color: #888; vertical-align: bottom; padding-bottom: 3px; border-bottom: 1px solid #ddd; }
tbody th.pick { background: #dedede; color: #217346; border-left: 2px solid #217346; }
tbody td.gray { background: #a0a0a0; }
tbody td.edge { border-right: 3px solid #0000d0; }
tbody td.soft { border-right-color: #d0d0d0; }
tbody td.box { background: #a5a5a5; text-align: center; }
tbody td.mid { text-align: center; }
tbody td.green { background: #c6e0b4; text-align: center; }
tbody td.o { background: #ed7d31; } tbody td.k { background: #000; } tbody td.n { background: #18242c; }
tbody tr.blue td.e { background: #d9e1f2; } tbody tr.warm td.e { background: #f4b084; }
tbody td.name { text-align: left; }
tbody td.net { position: relative; }
td.net::after { content: ""; position: absolute; right: 0; top: 0; border: 2px solid; border-color: #1f7a3f #1f7a3f transparent transparent; }
tbody td.head { background: #000; color: #fff2cc; font-size: 14px; font-weight: 700; border-right-color: #ed7d31; vertical-align: top; position: relative; }
tbody td.blank { background: #000; border-right-color: #000; }
tbody td.last { border-right-color: #000; }
tbody td.lead { border-right-color: #ed7d31; }
.filter { position: absolute; left: 0; top: 6px; width: 17px; height: 17px; background: #f6f8fa; border: 2px solid #c9cdd1; }
tbody td.dept { background: #ed7d31; border-right: 2px solid #1a1a8c; text-align: center; padding: 0; }
tbody td.dept.light { background: #f4b084; }
.turn { display: inline-block; transform: rotate(-45deg); font-size: 22px; margin: 0 -10px; }
.rule { display: block; height: 2px; background: #000; margin: 9px 6px 0; }
tbody td.sel { position: relative; box-shadow: inset 0 0 0 2px #217346, inset 0 0 0 3px #ddd; }
.arrow { position: absolute; left: 520px; top: 284px; }
.pagemark { position: absolute; right: 470px; top: 620px; font: 153px/176px "Liberation Sans", sans-serif; color: #969696; mix-blend-mode: darken; white-space: nowrap; pointer-events: none; }

.strip { display: flex; align-items: center; height: 29px; flex: none; background: #f5f5f5; padding-left: 21px; }
.hscroll { display: flex; width: 730px; height: 15px; background: #f1f1f1; }
.hscroll button { width: 15px; border: 1px solid #999; background: #fff; font: 8px/8px "DejaVu Sans", sans-serif; }
.htrack { flex: 1; } .hthumb { width: 18px; border: 1px solid #999; background: #fff; }
.plus { margin-left: auto; margin-right: 34px; }
.sheets { display: flex; height: 29px; color: #555; border-right: 1px solid #bbb; }
.sheets a { padding: 5px 13px 0 12px; font-size: 13px; border-left: 1px solid #bbb; height: 25px; }
.sheets .cur { color: #217346; font-weight: 700; background: #fff; border-bottom: 2px solid #217346; }
.arrows { width: 101px; display: flex; justify-content: center; gap: 20px; color: #bbb; font-size: 9px; padding-left: 10px; }

.status { display: flex; align-items: center; height: 21px; flex: none; background: #217346; color: #fff; padding-left: 11px; font-size: 11px; }
.status b { font-weight: 600; }
.ready { margin-right: 18px; } .status > svg { margin-right: 3px; }
.views { display: flex; margin-left: auto; height: 21px; }
.views button { width: 40px; } .views .sel { background: #004b1c; }
.z { width: 18px; font-size: 14px; }
input[type=range] { appearance: none; width: 102px; height: 15px; background: linear-gradient(#fff, #fff) no-repeat 0 7px / 100% 1px, linear-gradient(#fff, #fff) no-repeat 50px 5px / 1px 5px; }
input[type=range]::-webkit-slider-thumb { appearance: none; width: 5px; height: 11px; background: #fff; }
.pc { width: 43px; padding-left: 8px; }

.taskbar { display: flex; height: 40px; flex: none; background: linear-gradient(90deg, #10202a 0 38%, #131b1f 60%, #0a171f); color: #fff; padding-right: 6px; }
.taskbar > button { width: 48px; margin-right: 1px; position: relative; }
.taskbar > .run::after { content: ""; position: absolute; left: 4px; right: 4px; bottom: 0; height: 2px; background: #f9b4ac; }
.taskbar > .front { background: #4a5256; } .taskbar > .front::after { left: 0; right: 0; }
.tray { display: flex; margin-left: auto; align-items: center; }
.tray button { width: 32px; height: 40px; }
.tray .lang { width: 38px; font-size: 13px; }
.clock { display: flex; flex-direction: column; align-items: center; width: 60px; font-size: 11px; line-height: 19px; }
.tray .note { width: 48px; }

.sitemark { position: fixed; left: 0; right: 0; bottom: 20px; display: flex; flex-direction: column; align-items: center; color: rgba(200, 204, 202, .5); font-weight: 700; pointer-events: none; }
.ar { font: 700 72px/60px "DejaVu Sans Condensed", "DejaVu Sans", sans-serif; }
.la2 { font: 700 36px/44px "Open Sans", sans-serif; }
```
FILE: grid.js
```js
// Columns in sheet order (A first, drawn from the right); null takes the free width.
const widths = {
  A: 66, B: 98, C: null, D: 114, E: 64, F: 64, G: 70, H: 60, I: 60, J: 59, K: 67,
  L: 34, M: 34, N: 67, O: 34, P: 34, Q: 26, R: 26, S: 26, T: 26, U: 26, V: 26, W: 25, X: 27, Y: 26, Z: 26,
  AA: 26, AB: 26, AC: 26, AD: 26, AE: 26, AF: 26, AG: 26, AH: 26, AI: 26, AJ: 26, AK: 26, AL: 26, AM: 26, AN: 26, AO: 26, AP: 22
};
const cols = Object.keys(widths);

// id, name, base, allowance, overtime, gross, deduction, loan, absence, net
const staff = {
  4: [500, 'RAKAN ABDULLAH', 10000, 0, 0, 10000, 0, 0, 0, 10000],
  5: [501, 'TURKI ABDULLAH', 6000, 0, 0, 6000, 0, 0, 0, 6000],
  6: [675, 'FATHIYA HASSAN', 7000, 0, 0, 7000, 0, 0, 0, 7000],
  7: [676, 'RIHAM ABDULLAH', 5500, 0, 0, 5500, 0, 0, 0, 5500],
  8: [677, 'RAWAA ABDULLA', 4000, 0, 0, 4000, 0, 0, 0, 4000],
  9: [682, 'ABBAS ABDULLA', 10000, 0, 0, 10000, 0, 0, 0, 10000],
  10: [1142, 'ESHAK AMGAD', 1700, 300, 0, 2000, 0, 0, 0, 2000],
  11: [826, 'HARUN MIA', 700, 200, 0, 900, 0, 0, 0, 900],
  12: [790, 'KUMAR AMIT', 1400, 200, 0, 1600, '', '', '', 1600],
  13: [798, 'LALLO JHINKE/FARM', 1000, 200, 0, 1200, '', '', 120, 1080],
  14: [829, 'MANU GONDL/FARM', 1000, 200, 0, 1200, '', '', 40, 1160],
  15: [585, 'MONOO NADLAL', 1100, 200, 0, 1300, '', '', '', 1300],
  16: [868, 'ABGIJIT BISWAS', 1100, 200, 0, 1300, '', '', '', 1300],
  17: [876, 'JITENDRA ADYA - PRASAD', 1100, 200, 0, 1300, '', '', '', 1300],
  18: [917, 'MUHMMA SUYEB', 800, 200, 0, 1000, '', '', 67, 933],
  19: [767, 'NISHAD PRADUMAN', 1100, 200, 0, 1300, '', '', 43, 1257],
  20: [871, 'PRADIO KUMAR', 1100, 200, 0, 1300, '', '', '', 1300],
  21: [935, 'PAVAN', 1100, 200, 0, 1300, '', '', 173, 1127],
  22: [343, 'TEJ BAHADUR', 1100, 200, 0, 1300, '', 225, '', 1075],
  23: [1036, 'RAHUL YADAV', 1100, 200, 0, 1300, '', '', '', 1300],
  24: [883, 'MD SONU ALAM', 1300, 200, 0, 1500, '', '', 300, 1200],
  33: ['', '', '', '', '', '', '', '', '', '']
};
[[1062, 'MOHAMMED ALZAIN'], [1063, 'YOUSF AHMED ALJADHER'], [1064, 'AHMED ALKHATER'], [1068, 'MOHAMMED ALHAIRANI'],
 [1069, 'SAJAD ALFARDAN'], [1073, 'RIDHA MOHAMMED BIN AHMED'], [1075, 'HAIDER ALI ALOWA'], [1076, 'HAIDER NIZAR ALZAIDANI']]
  .forEach(([id, name], i) => { staff[25 + i] = [id, name, 4000, 0, 0, 4000, 0, 0, 0, 4000]; });

const heads = ['الرقم الواظفي', 'الاسم', 'الراتب الأساسي', 'الاعاشة', 'الإضافي', 'الإجمالى', 'الخصم', 'السلف', 'الغياب', 'الصافى'];

// Journal area, columns N to W: [text, colspan, class, rowspan]
const b = ['', 1, ''], s = ['', 1, 'soft'];
const plain = Array(10).fill(b);
const faint = plain.map((c, i) => (i >= 3 && i <= 5 ? s : c));
const box = t => [b, b, b, [t, 5, 'box'], b, b];
const line = (amount, text, span) => [[amount, 1, ''], [text, span, ''], ...Array(9 - span).fill(b)];
const journal = {
  2: [['', 3, ''], b, b, b, b, b, b, b],
  3: line(130990, 'ح/مصاريف الرواتب', 5),
  4: faint,
  5: [['الي مزكورين', 3, 'mid'], b, b, b, b, b, b, b],
  6: line(129262, 'ح/رواتب واجور العمال المستحقة', 8),
  7: line(0, 'ح/الخصم', 2),
  8: [[990, 1, ''], ['ح/الغياب', 2, ''], s, s, s, b, b, b, b],
  9: [[738, 1, ''], ['ح/السلف', 2, ''], s, s, s, b, b, b, b],
  10: box('متزن'), 11: box('0'), 12: plain,
  13: [['قيد سداد الرواتب(٢)', 6, 'green', 3], b, b, b, b],
  14: [b, b, b, b], 15: [b, b, b, b],
  16: line(129262, 'ح/الرواتب والأجور المستحقه', 7),
  17: [[129262, 1, ''], ['الي/البنك(النقدية)', 4, ''], s, b, b, b, b],
  18: box('متزن'), 19: box('0')
};
const el = (tag, cls, text) => {
  const e = document.createElement(tag);
  if (cls) e.className = cls;
  if (text !== undefined && text !== '') e.textContent = text;
  return e;
};

const grid = document.getElementById('grid');
const group = el('colgroup');
const first = el('col'); first.style.width = '12px'; group.append(first);
cols.forEach(c => {
  const col = el('col');
  if (widths[c]) col.style.width = widths[c] + 'px';
  group.append(col);
});
const thead = el('thead'), hr = el('tr');
hr.append(el('th'));
cols.forEach(c => hr.append(el('th', c === 'Z' ? 'pick' : '', c)));
thead.append(hr);
const tbody = el('tbody');

for (let r = 2; r <= 33; r++) {
  const tr = el('tr', r === 11 || r === 24 ? 'warm' : r % 2 ? 'blue' : '');
  tr.append(el('th', r === 19 ? 'pick' : '', r));

  const dept = { 2: ['المكتب', 9], 12: ['المزرعة', 12], 25: ['السعوديين', 9] }[r];
  if (dept) {
    const td = el('td', 'dept');
    td.rowSpan = dept[1];
    td.append(el('span', 'turn', dept[0]));
    tr.append(td);
  } else if (r === 11 || r === 24) {
    const td = el('td', 'dept light');
    td.append(el('span', 'rule'));
    tr.append(td);
  }

  if (r === 2) {
    heads.forEach((h, i) => {
      const td = el('td', i === 0 ? 'head last' : 'head', h);
      const f = el('button', 'filter');
      f.setAttribute('aria-label', 'Filter ' + h);
      f.innerHTML = '<svg width="7" height="4" viewBox="0 0 7 4"><path d="M0 0h7L3.500 4z" fill="#666"/></svg>';
      td.append(f);
      tr.append(td);
    });
  } else if (r === 3) {
    heads.forEach(() => tr.append(el('td', 'blank')));
  } else {
    staff[r].forEach((v, i) => tr.append(el('td', 'e' + (i === 1 ? ' name' : i === 9 ? ' net' : ''), v)));
  }

  const odd = r % 2 === 1;
  tr.append(el('td', r === 2 ? 'k lead' : r === 3 ? 'k' : r === 13 ? 'n' : odd ? 'k' : 'o'));
  tr.append(el('td', r === 2 || odd ? 'o' : 'k'));

  (journal[r] || (r >= 20 && r <= 27 ? faint : plain)).forEach(([t, span, cls, rows]) => {
    const td = el('td', cls, t);
    td.colSpan = span;
    if (rows) td.rowSpan = rows;
    tr.append(td);
  });

  cols.slice(cols.indexOf('X')).forEach(c => {
    tr.append(el('td', 'gray' + (c === 'X' ? ' edge' : '') + (c === 'Z' && r === 19 ? ' sel' : '')));
  });
  tbody.append(tr);
}
grid.append(group, thead, tbody);

const arrow = el('div', 'arrow');
arrow.innerHTML = '<svg width="71" height="70" viewBox="0 0 71 70"><defs><radialGradient id="gr"><stop offset="0" stop-color="#14663a"/><stop offset="1" stop-color="#069c41"/></radialGradient></defs><path d="M0 17h37V1l34 34-34 34V52H0z" fill="url(#gr)"/></svg>';
grid.parentNode.append(arrow);
```
